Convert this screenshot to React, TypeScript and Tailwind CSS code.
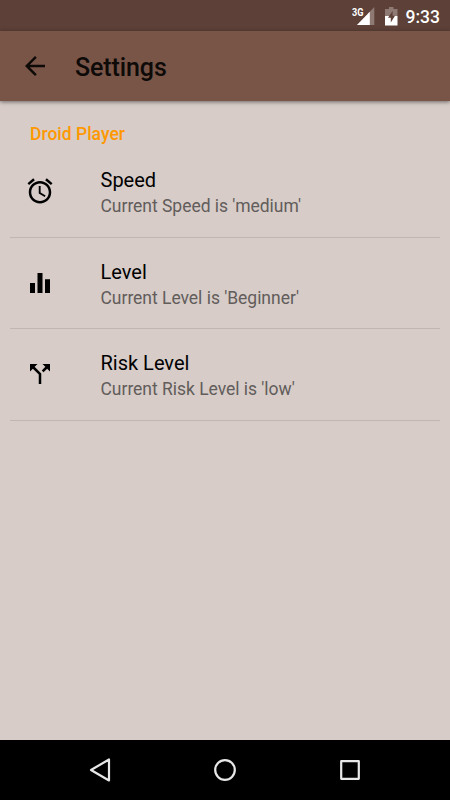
import type { ReactNode } from "react";

interface Preference {
  title: string;
  summary: string;
  icon: string;
}

const preferences: Preference[] = [
  {
    title: "Speed",
    summary: "Current Speed is 'medium'",
    icon: "M22 5.72l-4.6-3.86-1.29 1.53 4.6 3.86L22 5.72zM7.88 3.39L6.6 1.86 2 5.71l1.29 1.53 4.59-3.85zM12.5 8H11v6l4.75 2.85.75-1.23-4-2.37V8zM12 4c-4.97 0-9 4.03-9 9s4.02 9 9 9c4.97 0 9-4.03 9-9s-4.03-9-9-9zm0 16c-3.87 0-7-3.13-7-7s3.13-7 7-7 7 3.13 7 7-3.13 7-7 7z",
  },
  {
    title: "Level",
    summary: "Current Level is 'Beginner'",
    icon: "M10 20h4V4h-4v16zm-6 0h4v-8H4v8zM16 9v11h4V9h-4z",
  },
  {
    title: "Risk Level",
    summary: "Current Risk Level is 'low'",
    icon: "M14 4l2.29 2.29-2.88 2.88 1.42 1.42 2.88-2.88L20 10V4h-6zm-4 0H4v6l2.29-2.29 4.71 4.7V20h2v-8.41l-5.29-5.3L10 4z",
  },
];

function StatusBar() {
  return (
    <div className="flex h-[31px] shrink-0 items-center justify-end bg-[#5d4037] pt-[2px] pr-2.5 text-white">
      <svg width="24" height="20" viewBox="0 0 24 20" className="mr-[9px]">
        <path d="M22.3 0v18H5z" fill="#fff" fillOpacity="0.3" />
        <path d="M17.8 4.7V18H5z" fill="#fff" />
        <text x="0" y="8.5" fontSize="10" fontWeight="700" fill="#fff" textLength="11.5" lengthAdjust="spacingAndGlyphs">
          3G
        </text>
      </svg>
      <svg width="14" height="19" viewBox="0 0 14 19" className="mr-[7px]">
        <path d="M4 0h4.5v2h4v7H0V2h4z" fill="#fff" fillOpacity="0.3" />
        <path d="M0 9h12.5v9.5H0z" fill="#fff" />
        <path d="M7.6 4L3 10.7h2.8v4.8L10 8.8H7.6z" fill="#5d4037" />
      </svg>
      <span className="pt-[2px] text-[17.5px] leading-none font-medium">9:33</span>
    </div>
  );
}

function Toolbar({ title }: { title: string }) {
  return (
    <header className="z-10 flex h-[70px] shrink-0 items-center bg-[#795548] pl-5 text-[#0d0a08] shadow-[0_1px_4px_rgba(0,0,0,0.5)]">
      <svg width="30" height="30" viewBox="0 0 24 24" fill="currentColor">
        <path d="M20 11H7.83l5.59-5.59L12 4l-8 8 8 8 1.41-1.41L7.83 13H20v-2z" />
      </svg>
      <h1 className="ml-[25px] pt-[2px] text-[25px] leading-none font-medium tracking-[-0.1px]">{title}</h1>
    </header>
  );
}

function PreferenceRow({ title, summary, icon }: Preference) {
  return (
    <li className="flex h-[91.67px] items-center border-b border-[#c0b6b2] pl-[15px]">
      <svg width="30" height="30" viewBox="0 0 24 24" fill="#000" className="-mt-[0.6px]">
        <path d={icon} />
      </svg>
      <div className="ml-[45.5px] pt-[4.6px]">
        <div className="text-[20px] leading-[25px] text-black">{title}</div>
        <div className="text-[17.5px] leading-[26px] tracking-[-0.03px] text-[#625d5b]">{summary}</div>
      </div>
    </li>
  );
}

function NavButton({ children }: { children: ReactNode }) {
  return (
    <button className="flex w-[125px] items-center justify-center">
      <svg width="30" height="30" viewBox="0 0 30 30" fill="none" stroke="#e8e8e8" strokeWidth="2.2" strokeLinejoin="round">
        {children}
      </svg>
    </button>
  );
}

export default function App() {
  return (
    <div className="flex h-[800px] w-[450px] flex-col overflow-hidden bg-[#d7ccc8] font-[Roboto,sans-serif]">
      <StatusBar />
      <Toolbar title="Settings" />

      {/* Preference list */}
      <main className="flex-1 px-2.5 pt-[22px]">
        <h2 className="h-[23px] pl-5 text-[17.5px] leading-[22px] font-medium text-[#ff9800]">Droid Player</h2>
        <ul>
          {preferences.map((preference) => (
            <PreferenceRow key={preference.title} {...preference} />
          ))}
        </ul>
      </main>

      {/* Navigation bar */}
      <nav className="flex h-[60px] shrink-0 justify-center bg-black">
        <NavButton>
          <path d="M24 4.5v21L6 15z" />
        </NavButton>
        <NavButton>
          <circle cx="15" cy="15" r="9.8" />
        </NavButton>
        <NavButton>
          <rect x="6.2" y="6.2" width="17.6" height="17.6" />
        </NavButton>
      </nav>
    </div>
  );
}
